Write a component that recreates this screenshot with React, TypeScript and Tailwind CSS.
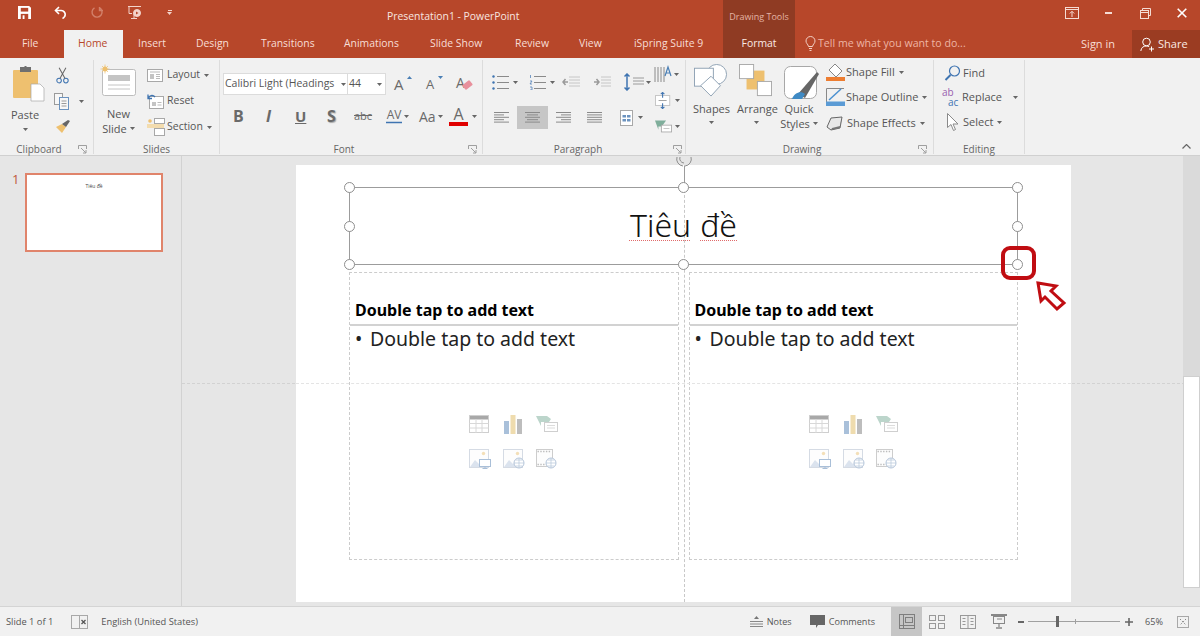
import React from "react";

const F = "font-['Open_Sans','Noto_Sans',sans-serif]";

function Caret({ className = "" }: { className?: string }) {
  return <svg width="5" height="3" viewBox="0 0 5 3" className={`shrink-0 ${className}`}><path d="M0 0h5L2.500 3z" fill="#666" /></svg>;
}

function Launcher() {
  return (
    <svg width="9" height="9" viewBox="0 0 9 9" fill="none" stroke="#8a8a8a" strokeWidth="0.8">
      <path d="M.5 4V.5H8.500V4M3 3l4.500 4.500M5 8h3V5" />
    </svg>
  );
}

function Group({ w, label, launcher, children, pr = 10 }: { w: string; label: string; launcher?: boolean; children: React.ReactNode; pr?: number }) {
  return (
    <div className={`${w} h-[94px] mt-[2px] shrink-0 flex flex-col border-r border-[#dcdcdc]`}>
      <div className="flex-1 min-h-0 flex">{children}</div>
      <div className="h-[10px] flex items-center relative">
        <span className="flex-1 text-center text-[10px] leading-[10px] text-[#666]">{label}</span>
        {launcher && <span className="flex items-center" style={{ marginRight: pr }}><Launcher /></span>}
      </div>
    </div>
  );
}

function Tab({ children, w }: { children: React.ReactNode; w: string }) {
  return <div className={`${w} pl-[15px] h-[28px] shrink-0 flex items-center text-[10.4px] whitespace-nowrap text-[#f8ded6]`}>{children}</div>;
}

function Row({ icon, text, caret, gap = 4, h = "h-[26px]", size = "text-[11px]" }: { icon: React.ReactNode; text: string; caret?: boolean; gap?: number; h?: string; size?: string }) {
  return (
    <div className={`${h} ${size} shrink-0 flex items-center text-[#555] whitespace-nowrap`}>
      <span className="flex items-center justify-center shrink-0" style={{ marginRight: gap }}>{icon}</span>
      <span>{text}</span>
      {caret && <Caret className="ml-[4px]" />}
    </div>
  );
}

const Lines = ({ kind }: { kind: "l" | "c" | "r" | "j" }) => {
  const ws: number[] = kind === "j" ? [15, 15, 15, 15, 15] : kind === "c" ? [15, 11, 15, 11, 15] : [15, 10, 15, 10, 15];
  return (
    <svg width="15" height="11" viewBox="0 0 15 11" stroke="#8a8a8a" strokeWidth="1">
      {ws.map((w, i) => {
        const x = kind === "r" ? 15 - w : kind === "c" ? (15 - w) / 2 : 0;
        return <line key={i} x1={x} x2={x + w} y1={i * 2.4 + 0.5} y2={i * 2.4 + 0.5} />;
      })}
    </svg>
  );
};

function TableIcon() {
  return (
    <svg width="20" height="18" viewBox="0 0 20 18" fill="none">
      <rect x=".5" y=".5" width="19" height="4" fill="#a8a8a8" />
      <rect x=".5" y=".5" width="19" height="17" stroke="#cfcfcf" />
      <path d="M.5 8.500h19M.5 13h19M7 4v14M13 4v14" stroke="#d8d8d8" />
    </svg>
  );
}
function ChartIcon() {
  return (
    <svg width="20" height="19" viewBox="0 0 20 19">
      <rect x="1" y="6" width="5" height="13" fill="#a9c0da" />
      <rect x="7.500" y="0" width="5" height="19" fill="#efdcae" />
      <rect x="14" y="4" width="5" height="15" fill="#bdbdbd" />
    </svg>
  );
}
function SmartIcon() {
  return (
    <svg width="22" height="17" viewBox="0 0 22 17" fill="none">
      <path d="M0 1h11l4 3-2 3H5v4z" fill="#bcd5cb" />
      <rect x="8.500" y="7.500" width="13" height="9" fill="#fff" stroke="#cfcfcf" />
      <path d="M11 10.500h8M11 13h8" stroke="#dcdcdc" />
    </svg>
  );
}
function PicBase({ children, online }: { children?: React.ReactNode; online?: boolean }) {
  return (
    <svg width="22" height="20" viewBox="0 0 22 20" fill="none">
      <rect x=".5" y=".5" width="19" height="18" fill="#fdfdfd" stroke="#d5dbe4" />
      <circle cx="14.500" cy="4.500" r="1.700" fill="#f3dfb8" />
      <path d="M1 18l5-7 4 4 2-2 3 5z" fill="#dbe3ee" />
      {online && <g><circle cx="16" cy="14" r="5" fill="#fff" stroke="#b6c6da" /><path d="M11 14h10M16 9v10M12.500 11h7M12.500 17h7" stroke="#b6c6da" strokeWidth=".7" /></g>}
      {children}
    </svg>
  );
}
function PicScreen() {
  return (
    <PicBase>
      <rect x="10.500" y="10.500" width="11" height="7" fill="#fff" stroke="#a9bfd8" />
      <path d="M16 17.500V19M13.500 19.500h5" stroke="#a9bfd8" />
    </PicBase>
  );
}
function FilmIcon() {
  return (
    <svg width="21" height="20" viewBox="0 0 21 20" fill="none">
      <rect x=".5" y=".5" width="16" height="17" fill="#fdfdfd" stroke="#cdcdcd" />
      <path d="M1.500 2.500h14M1.500 15.500h14" stroke="#bdbdbd" strokeDasharray="1.400 1.400" strokeWidth="1.600" />
      <circle cx="15" cy="14" r="5" fill="#fff" stroke="#b6c6da" />
      <path d="M10 14h10M15 9v10M11.500 11h7M11.500 17h7" stroke="#b6c6da" strokeWidth=".7" />
    </svg>
  );
}

function Placeholder() {
  return (
    <div className="flex-1 h-[288px] border border-dashed border-[#cccccc] flex flex-col">
      <div className="h-[53px] shrink-0 border-b-2 border-[#d2d2d2] flex items-end pl-[5px] pb-[3px] text-[16px] font-bold text-black font-['Noto_Sans',sans-serif] leading-[22px]">
        Double tap to add text
      </div>
      <div className="pl-[5px] -mt-[1px] flex text-[19.5px] leading-[27px] text-[#222] font-['Noto_Sans',sans-serif]">
        <span className="w-[15px]">•</span>
        <span>Double tap to add text</span>
      </div>
      <div className="mt-[63px] pl-[119px] grid grid-cols-[34px_33px_33px] gap-y-[15px] items-start">
        <TableIcon /><ChartIcon /><SmartIcon />
        <PicScreen /><PicBase online /><FilmIcon />
      </div>
    </div>
  );
}

function Handle({ cls }: { cls: string }) {
  return <span className={`absolute w-[11px] h-[11px] rounded-full bg-white border-[1.5px] border-[#8e8e8e] ${cls}`} />;
}

const titleWord = "underline decoration-dotted decoration-[#e06a6a] decoration-[1px] [text-underline-offset:3px]";

export default function App() {
  return (
    <div className={`w-[1200px] h-[636px] overflow-hidden flex flex-col bg-[#e6e6e6] ${F}`}>
      {/* title bar */}
      <div className="h-[58px] bg-[#b7472a] flex flex-col shrink-0 relative">
        <div className="h-[30px] flex items-center">
          <div className="w-[180px] shrink-0 flex items-center pb-[5px]">
            <svg className="ml-[18px]" width="13" height="13" viewBox="0 0 14 14"><path d="M0 0h12l2 2v12H0z" fill="#fff" /><rect x="3" y="2" width="8" height="4" fill="#b7472a" /><rect x="3" y="8.500" width="8" height="5.500" fill="#b7472a" /><rect x="5" y="10" width="2" height="4" fill="#fff" /></svg>
            <svg className="ml-[23px]" width="13" height="13" viewBox="0 0 13 13" fill="none" stroke="#fff" strokeWidth="1.600"><path d="M5 1L1.500 4.500 5 8" /><path d="M2 4.500h5a4 4 0 0 1 3 6.800L8.500 12.500" /></svg>
            <svg className="ml-[24px]" width="13" height="13" viewBox="0 0 13 13" fill="none" stroke="#d2806a" strokeWidth="1.400"><path d="M8 1.500a5 5 0 1 1-4.500.3M8.500 1v3.500H12" /></svg>
            <svg className="ml-[23px]" width="15" height="15" viewBox="0 0 15 15" fill="none" stroke="#f3d3c9" strokeWidth="1"><path d="M1 1.500h13M2 1.500v7h3M4 13.500h6M7 9v4" /><circle cx="10" cy="8" r="3.500" fill="#f3d3c9" /><path d="M9 6.500v3l2.500-1.500z" fill="#b7472a" stroke="none" /></svg>
            <span className="ml-[25px] flex flex-col items-center gap-[1px]"><span className="w-[4px] h-[1px] bg-[#f3d3c9]" /><svg width="5" height="3" viewBox="0 0 5 3"><path d="M0 0h5L2.500 3z" fill="#f3d3c9" /></svg></span>
          </div>
          <div className="w-[543px] shrink-0 pl-[207px] pt-[3px] text-[10.4px] text-[#f8e6e0] whitespace-nowrap">Presentation1 - PowerPoint</div>
          <div className="ml-auto flex items-center pb-[4px]">
            <svg width="14" height="12" viewBox="0 0 14 12" fill="none" stroke="#f5dcd4"><rect x=".5" y=".5" width="13" height="11" /><path d="M.5 2.500h13" /><path d="M7 10V4.500M4.800 6.500L7 4.300l2.200 2.200" /></svg>
            <span className="ml-[26px] w-[7px] h-[2px] bg-[#f5dcd4]" />
            <svg className="ml-[28px]" width="11" height="11" viewBox="0 0 11 11" fill="none" stroke="#f5dcd4"><rect x=".5" y="2.500" width="8" height="8" strokeWidth="1" /><path d="M.5 4.500h8M2.500 2.500v-2h8v7h-2" /></svg>
            <svg className="ml-[26px] mr-[13px]" width="10" height="10" viewBox="0 0 10 10" stroke="#fff" strokeWidth="1.600"><path d="M.7.7l8.600 8.600M9.300.7L.7 9.300" /></svg>
          </div>
        </div>
        <div className="h-[28px] flex items-center">
          <div className="w-[64px] h-[28px] shrink-0 pl-[22px] flex items-center text-[10.4px] text-[#f8ded6]">File</div>
          <div className="pl-[14px] h-[28px] w-[59px] shrink-0 bg-[#f1f1f1] flex items-center text-[10.4px] text-[#b7472a]">Home</div>
          <Tab w="w-[58px]">Insert</Tab>
          <Tab w="w-[65px]">Design</Tab>
          <Tab w="w-[83px]">Transitions</Tab>
          <Tab w="w-[86px]">Animations</Tab>
          <Tab w="w-[85px]">Slide Show</Tab>
          <Tab w="w-[64px]">Review</Tab>
          <Tab w="w-[55px]">View</Tab>
          <Tab w="w-[104px]">iSpring Suite 9</Tab>
          <div className="w-[72px] h-[28px] shrink-0 bg-[#8f3b23] flex items-center justify-center text-[10.4px] text-[#fbeae4]">Format</div>
          <div className="ml-[10px] flex items-center text-[10.6px] text-[#eeb5a4] whitespace-nowrap">
            <svg width="11" height="15" viewBox="0 0 11 15" fill="none" stroke="#f3d0c5" className="mr-[2px]"><path d="M3.500 10.500C3 8 1 7.500 1 5a4.500 4.500 0 0 1 9 0c0 2.500-2 3-2.500 5.500zM4 12.500h3M4.500 14.500h2" /></svg>
            Tell me what you want to do...
          </div>
          <div className="ml-auto flex items-center">
            <span className="text-[11px] text-[#f8ded6]">Sign in</span>
            <div className="ml-[17px] w-[68px] h-[28px] bg-[#9b3c22] flex items-center pl-[8px] text-[11px] text-[#fbeae4]">
              <svg width="15" height="15" viewBox="0 0 15 15" fill="none" stroke="#fff" className="mr-[3px]"><circle cx="6.500" cy="5" r="3.800" /><path d="M.8 14c.5-3.500 2.500-5 5.700-5 1 0 2 .3 2.700.7M11.500 9.500v5M9 12h5" /></svg>
              Share
            </div>
          </div>
        </div>
        {/* contextual "Drawing Tools" header sits over the title row */}
        <div className="absolute left-[723px] top-0 w-[72px] h-[30px] pt-[3px] bg-[#8f3b23] flex items-center justify-center text-[9px] text-[#e3b3a3] whitespace-nowrap">Drawing Tools</div>
      </div>

      {/* ribbon */}
      <div className="h-[98px] shrink-0 bg-[#f1f1f1] border-b border-[#d0d0d0] flex relative">
        <Group w="w-[94px]" label="Clipboard" launcher pr={6}>
          <div className="w-[55px] shrink-0 pl-[12px] pt-[6px] flex flex-col">
            <svg className="shrink-0" width="33" height="36" viewBox="0 0 33 36"><rect x="1" y="4" width="25" height="28" rx="1" fill="#eec06f" /><path d="M8 4h11V1h-4l-1-1h-1l-1 1H8z" fill="#6f6f6f" /><rect x="8" y="3" width="11" height="3" fill="#6f6f6f" /><path d="M19 18h9l4 4v13H19z" fill="#fff" stroke="#a8a8a8" strokeWidth=".7" /></svg>
            <span className="mt-[5px] -ml-[1px] text-[11px] leading-[15px] text-[#555]">Paste</span>
            <Caret className="ml-[11px] mt-[6px]" />
          </div>
          <div className="flex flex-col pt-[7px]">
            <svg className="shrink-0" width="15" height="17" viewBox="0 0 16 20" fill="none" stroke="#3f74b1" strokeWidth="1.200"><circle cx="4" cy="16" r="2.700" /><circle cx="12" cy="16" r="2.700" /><path d="M5 13.500L12 1M11 13.500L4 1" stroke="#666" /></svg>
            <div className="flex items-center h-[18px] mt-[8px] -ml-[1px]">
              <svg width="15" height="17" viewBox="0 0 15 17" fill="none" stroke="#9a9a9a"><rect x=".5" y=".5" width="8" height="11" fill="#f7f7f7" /><rect x="5.500" y="4.500" width="9" height="12" fill="#f7f7f7" stroke="#6c93bf" /><path d="M7.500 8h5M7.500 10.500h5M7.500 13h5" /></svg>
              <Caret className="ml-[10px]" />
            </div>
            <svg className="mt-[10px] shrink-0" width="16" height="14" viewBox="0 0 16 14"><path d="M1 7l6 6 4-6-4-3z" fill="#eec06f" /><path d="M7 4l4 3 4-6-2-1z" fill="#666" /></svg>
          </div>
        </Group>

        <Group w="w-[126px]" label="Slides">
          <div className="w-[53px] shrink-0 pl-[6px] pt-[4px] flex flex-col items-center">
            <svg className="self-start shrink-0" width="36" height="32" viewBox="0 0 36 32" fill="none"><rect x="2.500" y="5.500" width="33" height="26" rx="2" fill="#fff" stroke="#bdbdbd" /><rect x="8" y="11" width="22" height="6" fill="#c4c4c4" /><path d="M8 21h22M8 25h22" stroke="#c4c4c4" /><circle cx="5" cy="5" r="2.500" fill="#eec06f" /><path d="M5 .5v9M.5 5h9M2 2l6 6M8 2l-6 6" stroke="#eec06f" strokeWidth=".7" /></svg>
            <span className="mt-[10px] text-[11px] leading-[15px] text-[#555] -ml-[10px]">New</span>
            <span className="text-[11px] leading-[15px] text-[#555] -ml-[10px] flex items-center whitespace-nowrap">Slide<Caret className="ml-[3px]" /></span>
          </div>
          <div className="flex flex-col pt-[2px]">
            <Row size="text-[10.5px]" icon={<svg width="16" height="13" viewBox="0 0 16 13" fill="none"><rect x=".5" y=".5" width="15" height="12" fill="#fff" stroke="#a8a8a8" /><path d="M3 3h10" stroke="#bbb" /><rect x="3" y="5" width="4" height="5" fill="#c4c4c4" /><path d="M9 5.500h4M9 7.500h4M9 9.500h4" stroke="#bbb" /></svg>} text="Layout" caret />
            <Row size="text-[10.5px]" icon={<svg width="17" height="16" viewBox="0 0 17 16" fill="none"><rect x="2.500" y="3.500" width="14" height="12" fill="#fff" stroke="#a8a8a8" /><rect x="5" y="9" width="4" height="4" fill="#c4c4c4" /><path d="M10.500 9.500h4M10.500 12h4" stroke="#bbb" /><path d="M1 5.500a4 4 0 0 1 7-1.500M1 1.500v4h4" stroke="#3f74b1" strokeWidth="1.300" /></svg>} text="Reset" gap={3} />
            <Row size="text-[10.5px]" icon={<svg width="18" height="18" viewBox="0 0 18 18" fill="none"><rect x="0" y="6" width="17" height="4" fill="#f3dcae" /><rect x="7.500" y=".5" width="10" height="5" fill="#fff" stroke="#a8a8a8" /><rect x="7.500" y="10.500" width="10" height="7" fill="#fff" stroke="#a8a8a8" /><circle cx="3" cy="3" r="1.800" fill="#eec06f" /></svg>} text="Section" caret gap={2} />
          </div>
        </Group>

        <Group w="w-[263px]" label="Font" launcher pr={5}>
          <div className="pl-[3px] pt-[13px] flex flex-col">
            <div className="flex items-center h-[22px] shrink-0">
              <div className="w-[125px] h-[22px] bg-white border border-[#dcdcdc] flex items-center pl-[1px] text-[10.5px] text-[#555] whitespace-nowrap overflow-hidden">Calibri Light (Headings<Caret className="ml-auto mr-[1px]" /></div>
              <div className="w-[38px] h-[22px] bg-white border border-l-0 border-[#dcdcdc] flex items-center pl-[1px] text-[10.5px] text-[#555]">44<Caret className="ml-auto mr-[3px]" /></div>
              <span className="ml-[8px] w-[15px] relative text-[15px] leading-[18px] text-[#6a6a6a]">A<svg className="absolute right-[-3px] top-[1px]" width="5" height="3" viewBox="0 0 5 3"><path d="M0 3h5L2.500 0z" fill="#4a7fb5" /></svg></span>
              <span className="ml-[17px] w-[14px] relative text-[13px] leading-[18px] text-[#6a6a6a]">A<svg className="absolute right-[-3px] top-[1px]" width="5" height="3" viewBox="0 0 5 3"><path d="M0 0h5L2.500 3z" fill="#4a7fb5" /></svg></span>
              <span className="ml-[16px] w-[18px] relative text-[14px] leading-[18px] text-[#6a6a6a] -mt-[3px]">A<svg className="absolute left-[6px] top-[6px]" width="11" height="10" viewBox="0 0 11 10"><rect x="1" y="2" width="9" height="6" rx="1" transform="rotate(-38 5.500 5)" fill="#e8909c" /></svg></span>
            </div>
            <div className="flex items-center h-[24px] shrink-0 mt-[9px] text-[#6a6a6a] font-['Open_Sans',sans-serif]">
              <span className="w-[31px] ml-[10px] text-[16px] font-bold">B</span>
              <span className="w-[31px] pl-[2px] text-[16px] italic font-bold">I</span>
              <span className="w-[32px] text-[15px] font-bold underline">U</span>
              <span className="w-[27px] text-[16px] font-bold [text-shadow:1px_1px_1px_#aaa]">S</span>
              <span className="w-[32px] text-[11px] line-through">abc</span>
              <span className="flex items-center w-[33px]">
                <span className="flex flex-col items-center leading-[12px] text-[12px]">AV<svg width="16" height="3" viewBox="0 0 16 3"><path d="M0 1.500h16" stroke="#3f74b1" strokeWidth="1.500" /></svg></span>
                <Caret className="ml-[2px]" />
              </span>
              <span className="flex items-center w-[30px] text-[14px]">Aa<Caret className="ml-[2px]" /></span>
              <span className="flex items-center">
                <span className="flex flex-col items-center text-[16px] leading-[15px]">A<span className="w-[19px] h-[4px] bg-[#e00000]" /></span>
                <Caret className="ml-[4px]" />
              </span>
            </div>
          </div>
        </Group>

        <Group w="w-[203px]" label="Paragraph" launcher pr={3}>
          <div className="pl-[9px] pt-[11px] flex">
            <div className="flex flex-col w-[162px] shrink-0">
              <div className="flex items-center h-[22px] shrink-0">
                <svg width="17" height="15" viewBox="0 0 17 15" stroke="#8a8a8a"><circle cx="1.500" cy="1.500" r="1.200" fill="#3f74b1" stroke="none" /><circle cx="1.500" cy="7.500" r="1.200" fill="#3f74b1" stroke="none" /><circle cx="1.500" cy="13.500" r="1.200" fill="#3f74b1" stroke="none" /><path d="M5 1.500h12M5 7.500h12M5 13.500h12" /></svg>
                <Caret className="ml-[4px]" />
                <svg className="ml-[11px]" width="17" height="16" viewBox="0 0 17 16" stroke="#8a8a8a"><path d="M5 2.500h12M5 8.500h12M5 14.500h12" /><path d="M1.500 1v3M1 7h2L1 10h2M1 13h2v3H1" stroke="#3f74b1" strokeWidth=".7" fill="none" /></svg>
                <Caret className="ml-[4px]" />
                <svg className="ml-[7px]" width="18" height="12" viewBox="0 0 18 12" stroke="#c6c6c6"><path d="M7 1h11M7 4h11M7 7h11M7 10h11" /><path d="M6 6H1M3.500 3L1 6l2.500 3" stroke="#9a9a9a" strokeWidth="1.500" fill="none" /></svg>
                <svg className="ml-[13px]" width="18" height="12" viewBox="0 0 18 12" stroke="#c6c6c6"><path d="M8 1h10M8 4h10M8 7h10M8 10h10" /><path d="M1 6h5M3.500 3L6 6 3.500 9" stroke="#9a9a9a" strokeWidth="1.500" fill="none" /></svg>
                <svg className="ml-[13px]" width="20" height="18" viewBox="0 0 20 18" fill="none"><path d="M3 1v16M.5 3.500L3 1l2.500 2.500M.5 14.500L3 17l2.500-2.500" stroke="#3f74b1" strokeWidth="1.500" /><path d="M9 5h11M9 8h11M9 11h11" stroke="#9a9a9a" /></svg>
                <Caret className="ml-[2px]" />
              </div>
              <div className="flex items-center h-[23px] shrink-0 mt-[13px]">
                <span className="w-[31px] h-[23px] flex items-center justify-center -ml-[6px]"><Lines kind="l" /></span>
                <span className="w-[31px] h-[23px] bg-[#c6c6c6] flex items-center justify-center"><Lines kind="c" /></span>
                <span className="w-[31px] h-[23px] flex items-center justify-center"><Lines kind="r" /></span>
                <span className="w-[31px] h-[23px] flex items-center justify-center"><Lines kind="j" /></span>
                <svg className="ml-[10px]" width="13" height="16" viewBox="0 0 13 16" fill="none"><rect x=".5" y=".5" width="12" height="15" fill="#fff" stroke="#a8a8a8" /><rect x="2.500" y="5" width="3.500" height="2.500" fill="#6c93bf" /><rect x="7" y="5" width="3.500" height="2.500" fill="#6c93bf" /><rect x="2.500" y="9" width="3.500" height="2.500" fill="#6c93bf" /><rect x="7" y="9" width="3.500" height="2.500" fill="#6c93bf" /></svg>
                <Caret className="ml-[5px]" />
              </div>
            </div>
            <div className="flex flex-col -mt-[6px]">
              <div className="flex items-center h-[19px] shrink-0"><svg width="19" height="19" viewBox="0 0 19 19" fill="none"><path d="M1 2v15M4 2v15M7 2v15M10 2v15" stroke="#8a8a8a" /><path d="M11 11l3-9 3 9M12 8h4" stroke="#4a7fb5" strokeWidth="1.200" /></svg><Caret className="ml-[1px]" /></div>
              <div className="flex items-center h-[17px] shrink-0 mt-[8px] ml-[1px]"><svg width="17" height="17" viewBox="0 0 19 18" fill="none"><rect x=".5" y="3.500" width="16" height="11" fill="#fff" stroke="#c0c0c0" /><path d="M8.500 0v6M6.500 2L8.500 0l2 2M8.500 18v-6M6.500 16l2 2 2-2" stroke="#3f74b1" strokeWidth="1.200" /><path d="M4 9h9" stroke="#999" /></svg><Caret className="ml-[3px]" /></div>
              <div className="flex items-center h-[14px] shrink-0 mt-[10px] ml-[1px]"><svg width="17" height="14" viewBox="0 0 20 15" fill="none"><path d="M0 1h13l-5 7H4v4z" fill="#7fae9b" /><rect x="7.500" y="6.500" width="12" height="8" fill="#fff" stroke="#a8a8a8" /><path d="M10 10.500h7" stroke="#bbb" /></svg><Caret className="ml-[3px]" /></div>
            </div>
          </div>
        </Group>

        <Group w="w-[248px]" label="Drawing" launcher pr={6}>
          <div className="flex pl-[7px]">
            <div className="w-[45px] shrink-0 pt-[4px] flex flex-col items-start">
              <svg className="shrink-0" width="36" height="33" viewBox="0 0 36 35" fill="none" stroke="#8da0b3"><circle cx="24" cy="11" r="10.500" fill="#fff" /><rect x=".5" y="4.500" width="20" height="19" fill="#fff" /><path d="M18 13l10 10-10 11L7 23z" fill="#fff" /></svg>
              <span className="mt-[4px] text-[11px] leading-[15px] text-[#555]">Shapes</span>
              <Caret className="ml-[16px] mt-[5px]" />
            </div>
            <div className="w-[46px] shrink-0 pt-[4px] flex flex-col items-start">
              <svg className="shrink-0" width="35" height="33" viewBox="0 0 35 35" fill="none"><rect x="8" y="7" width="19" height="20" fill="#eec06f" /><rect x=".5" y=".5" width="15" height="15" fill="#fff" stroke="#a8a8a8" /><rect x="19.500" y="18.500" width="15" height="15" fill="#fff" stroke="#a8a8a8" /></svg>
              <span className="mt-[4px] text-[11px] leading-[15px] text-[#555] -ml-[1px]">Arrange</span>
              <Caret className="ml-[16px] mt-[5px]" />
            </div>
            <div className="w-[42px] shrink-0 pt-[6px] flex flex-col items-center">
              <svg className="self-start shrink-0" width="35" height="34" viewBox="0 0 35 34" fill="none"><rect x=".5" y=".5" width="32" height="32" rx="6" fill="#fff" stroke="#a8a8a8" /><path d="M14 28L33 6l2 2-14 24z" fill="#666" /><path d="M8 33c2-6 9-9 13-5l-3 5z" fill="#3f8ac4" /></svg>
              <span className="mt-[1px] text-[11px] leading-[15px] text-[#555] -ml-[12px]">Quick</span>
              <span className="text-[11px] leading-[15px] text-[#555] -ml-[12px] flex items-center whitespace-nowrap">Styles<Caret className="ml-[3px]" /></span>
            </div>
            <div className="flex flex-col">
              <Row icon={<svg width="19" height="19" viewBox="0 0 19 19" fill="none"><path d="M9 1l7 7-6 6-7-7z" fill="#fff" stroke="#888" /><rect x="0" y="14" width="19" height="4" fill="#ed7d31" /></svg>} text="Shape Fill" caret gap={1} h="h-[24px]" />
              <Row icon={<svg width="19" height="18" viewBox="0 0 19 18" fill="none"><path d="M.5 14V.5H18" stroke="#888" /><path d="M3 12L15 1" stroke="#4a90d0" strokeWidth="1.500" /><rect x="0" y="13.500" width="19" height="4.500" fill="#5b9bd5" /></svg>} text="Shape Outline" caret gap={1} h="h-[26px]" />
              <Row icon={<svg width="17" height="15" viewBox="0 0 17 15"><path d="M1 11L5 2l11-1-2 11-9 2z" fill="#e8e8e8" stroke="#666" /><path d="M16 1l-2 11-9 2 1-2 8-2z" fill="#777" /></svg>} text="Shape Effects" caret gap={4} h="h-[26px]" />
            </div>
          </div>
        </Group>

        <Group w="w-[91px]" label="Editing">
          <div className="pt-[1px] flex flex-col">
            <div className="pl-[10px]"><Row icon={<svg width="17" height="16" viewBox="0 0 17 16" fill="none" stroke="#3f74b1"><circle cx="10.500" cy="6" r="5" strokeWidth="1.200" /><path d="M6.500 10L1.500 15" strokeWidth="2" /></svg>} text="Find" gap={2} h="h-[24px]" /></div>
            <div className="pl-[8px]"><div className="h-[25px] flex items-center text-[11px] text-[#555] whitespace-nowrap">
              <span className="flex flex-col mr-[2px] leading-[9px] text-[10px] w-[18px] gap-[1px]"><span className="text-[#9a5fb0] h-[9px]">ab</span><span className="text-[#3f74b1] pl-[6px] h-[9px]">ac</span></span>Replace<Caret className="ml-[11px]" />
            </div></div>
            <div className="pl-[13px]"><Row icon={<svg width="11" height="18" viewBox="0 0 11 18" fill="#fff" stroke="#8a8a8a"><path d="M.5.5v14l3.500-3 2.500 6 2-1-2.500-5.500h5z" /></svg>} text="Select" caret gap={5} h="h-[24px]" /></div>
          </div>
        </Group>

        <svg className="absolute right-[9px] bottom-[6px]" width="9" height="5" viewBox="0 0 9 5" fill="none" stroke="#666" strokeWidth="1.200"><path d="M.5 4.500l4-4 4 4" /></svg>
      </div>

      {/* main */}
      <div className="flex-1 min-h-0 flex">
        <div className="w-[182px] shrink-0 border-r border-[#d2d2d2] pl-[12px] pt-[17px] flex items-start">
          <span className="text-[13px] leading-[13px] text-[#c0593c] w-[13px]">1</span>
          <div className="w-[138px] h-[79px] bg-white border-2 border-[#e0846b] flex justify-center pt-[8px] text-[5px] leading-[6px] text-[#444]">Tiêu đề</div>
        </div>
        <div className="flex-1 min-w-0 relative pl-[114px] pt-[9px]">
          <span className="absolute left-0 right-0 top-[227px] border-t border-dashed border-[#d2d2d2]" />
          <div className="relative w-[775px] h-[437px] bg-white pt-[22px] pl-[53px] pr-[53px]">
            <span className="absolute left-[388px] top-0 bottom-0 border-l border-dashed border-[#c8c8c8]" />
            <span className="absolute left-0 right-0 top-[218px] border-t border-dashed border-[#e4e4e4]" />
            <div className="relative h-[78px] border border-[#9c9c9c] flex items-center justify-center pb-[3px]">
              <span className="text-[32px] leading-[40px] font-light text-[#111] font-['Noto_Sans',sans-serif] flex gap-[9px]">
                <span className={titleWord}>Tiêu</span>
                <span className={titleWord}>đề</span>
              </span>
              <span className="absolute left-[334px] -top-[22px] h-[22px] border-l border-[#9c9c9c]" />
              <Handle cls="-left-[6px] -top-[6px]" />
              <Handle cls="left-[328px] -top-[6px]" />
              <Handle cls="-right-[6px] -top-[6px]" />
              <Handle cls="-left-[6px] top-[33px]" />
              <Handle cls="-right-[6px] top-[33px]" />
              <Handle cls="-left-[6px] -bottom-[6px]" />
              <Handle cls="left-[328px] -bottom-[6px]" />
              <Handle cls="-right-[6px] -bottom-[6px]" />
              <svg className="absolute left-[325px] -top-[31px]" width="18" height="10" viewBox="0 0 18 10" fill="none" stroke="#8e8e8e"><path d="M2 0a7 7 0 0 0 6 9M16 0a7 7 0 0 1-6 9M5 0a4.500 4.500 0 0 0 4 6" /></svg>
            </div>
            <div className="mt-[7px] flex gap-[10px]">
              <Placeholder />
              <Placeholder />
            </div>
            {/* callout */}
            <span className="absolute left-[705px] top-[81px] w-[35px] h-[34px] rounded-[9px] border-[4px] border-[#c00d12]" />
            <svg className="absolute left-[739px] top-[115px]" width="32" height="32" viewBox="0 0 32 32" fill="none" stroke="#c00d12" strokeWidth="3"><path d="M3 3L21 6 16 11 29 23 22 29 10 17 6 21z" fill="#fff" /></svg>
          </div>
          <div className="absolute right-0 top-0 bottom-0 w-[17px] flex flex-col">
            <div className="flex-1 bg-[#dadada]" />
            <div className="h-[212px] shrink-0 bg-white border border-[#cfcfcf]" />
            <div className="h-[18px] shrink-0" />
          </div>
        </div>
      </div>

      {/* status bar */}
      <div className="h-[30px] shrink-0 bg-[#f1f1f1] border-t border-[#d4d4d4] flex items-center text-[9.3px] text-[#555]">
        <span className="ml-[6px]">Slide 1 of 1</span>
        <svg className="ml-[18px]" width="17" height="14" viewBox="0 0 17 14" fill="none" stroke="#a8a8a8"><rect x=".5" y=".5" width="16" height="13" /><path d="M8.500.5v13" /><path d="M10.500 5l4 4M14.500 5l-4 4" stroke="#555" strokeWidth="1.300" /></svg>
        <span className="ml-[13px]">English (United States)</span>
        <div className="ml-auto flex items-center h-full text-[9.1px]">
          <svg width="13" height="13" viewBox="0 0 13 13" fill="none" stroke="#888"><path d="M0 6.500h13M0 9h13M0 11.500h13" /><path d="M4 4l2.500-3L9 4z" fill="#777" stroke="none" /></svg>
          <span className="ml-[4px]">Notes</span>
          <svg className="ml-[18px]" width="15" height="14" viewBox="0 0 15 14"><path d="M0 0h15v10H8l-2 3v-3H0z" fill="#666" /></svg>
          <span className="ml-[4px]">Comments</span>
          <div className="ml-[16px] w-[31px] h-full bg-[#c6c6c6] flex items-center justify-center">
            <svg width="16" height="15" viewBox="0 0 16 15" fill="none" stroke="#7e7e7e"><rect x=".5" y=".5" width="15" height="14" /><path d="M4.500.5v14M.5 11.500h15" /><rect x="6.500" y="3.500" width="7" height="5" /></svg>
          </div>
          <svg className="ml-[7px]" width="16" height="14" viewBox="0 0 16 14" fill="none" stroke="#999"><rect x=".5" y=".5" width="6" height="5" /><rect x="9.500" y=".5" width="6" height="5" /><rect x=".5" y="8.500" width="6" height="5" /><rect x="9.500" y="8.500" width="6" height="5" /></svg>
          <svg className="ml-[15px]" width="16" height="14" viewBox="0 0 16 14" fill="none" stroke="#999"><rect x=".5" y=".5" width="15" height="13" /><path d="M8 .5v13M2.500 3.500h3M2.500 6.500h3M2.500 9.500h3M10.500 3.500h3M10.500 6.500h3M10.500 9.500h3" /></svg>
          <svg className="ml-[15px]" width="16" height="15" viewBox="0 0 16 15" fill="none" stroke="#888"><path d="M0 1h16" strokeWidth="2" /><rect x="2.500" y="2.500" width="11" height="7" /><path d="M8 9.500V13M5 14h6" strokeWidth="1.300" /><path d="M6 5h5" /></svg>
          <span className="ml-[11px] w-[6px] h-[2px] bg-[#666]" />
          <div className="ml-[4px] w-[92px] h-[1px] bg-[#a0a0a0] relative">
            <span className="absolute left-[28px] -top-[5px] w-[3px] h-[11px] bg-[#666]" />
            <span className="absolute left-[47px] -top-[2px] w-[1px] h-[5px] bg-[#a0a0a0]" />
          </div>
          <svg className="ml-[5px]" width="8" height="8" viewBox="0 0 8 8" stroke="#666" strokeWidth="1.600"><path d="M0 4h8M4 0v8" /></svg>
          <span className="ml-[12px] w-[18px] whitespace-nowrap">65%</span>
          <svg className="ml-[14px] mr-[11px]" width="12" height="12" viewBox="0 0 12 12" fill="none" stroke="#a8a8a8"><rect x=".5" y=".5" width="11" height="11" /><path d="M3 3l6 6M9 3l-6 6" stroke="#888" strokeDasharray="1.500 1.500" /></svg>
        </div>
      </div>
    </div>
  );
}
